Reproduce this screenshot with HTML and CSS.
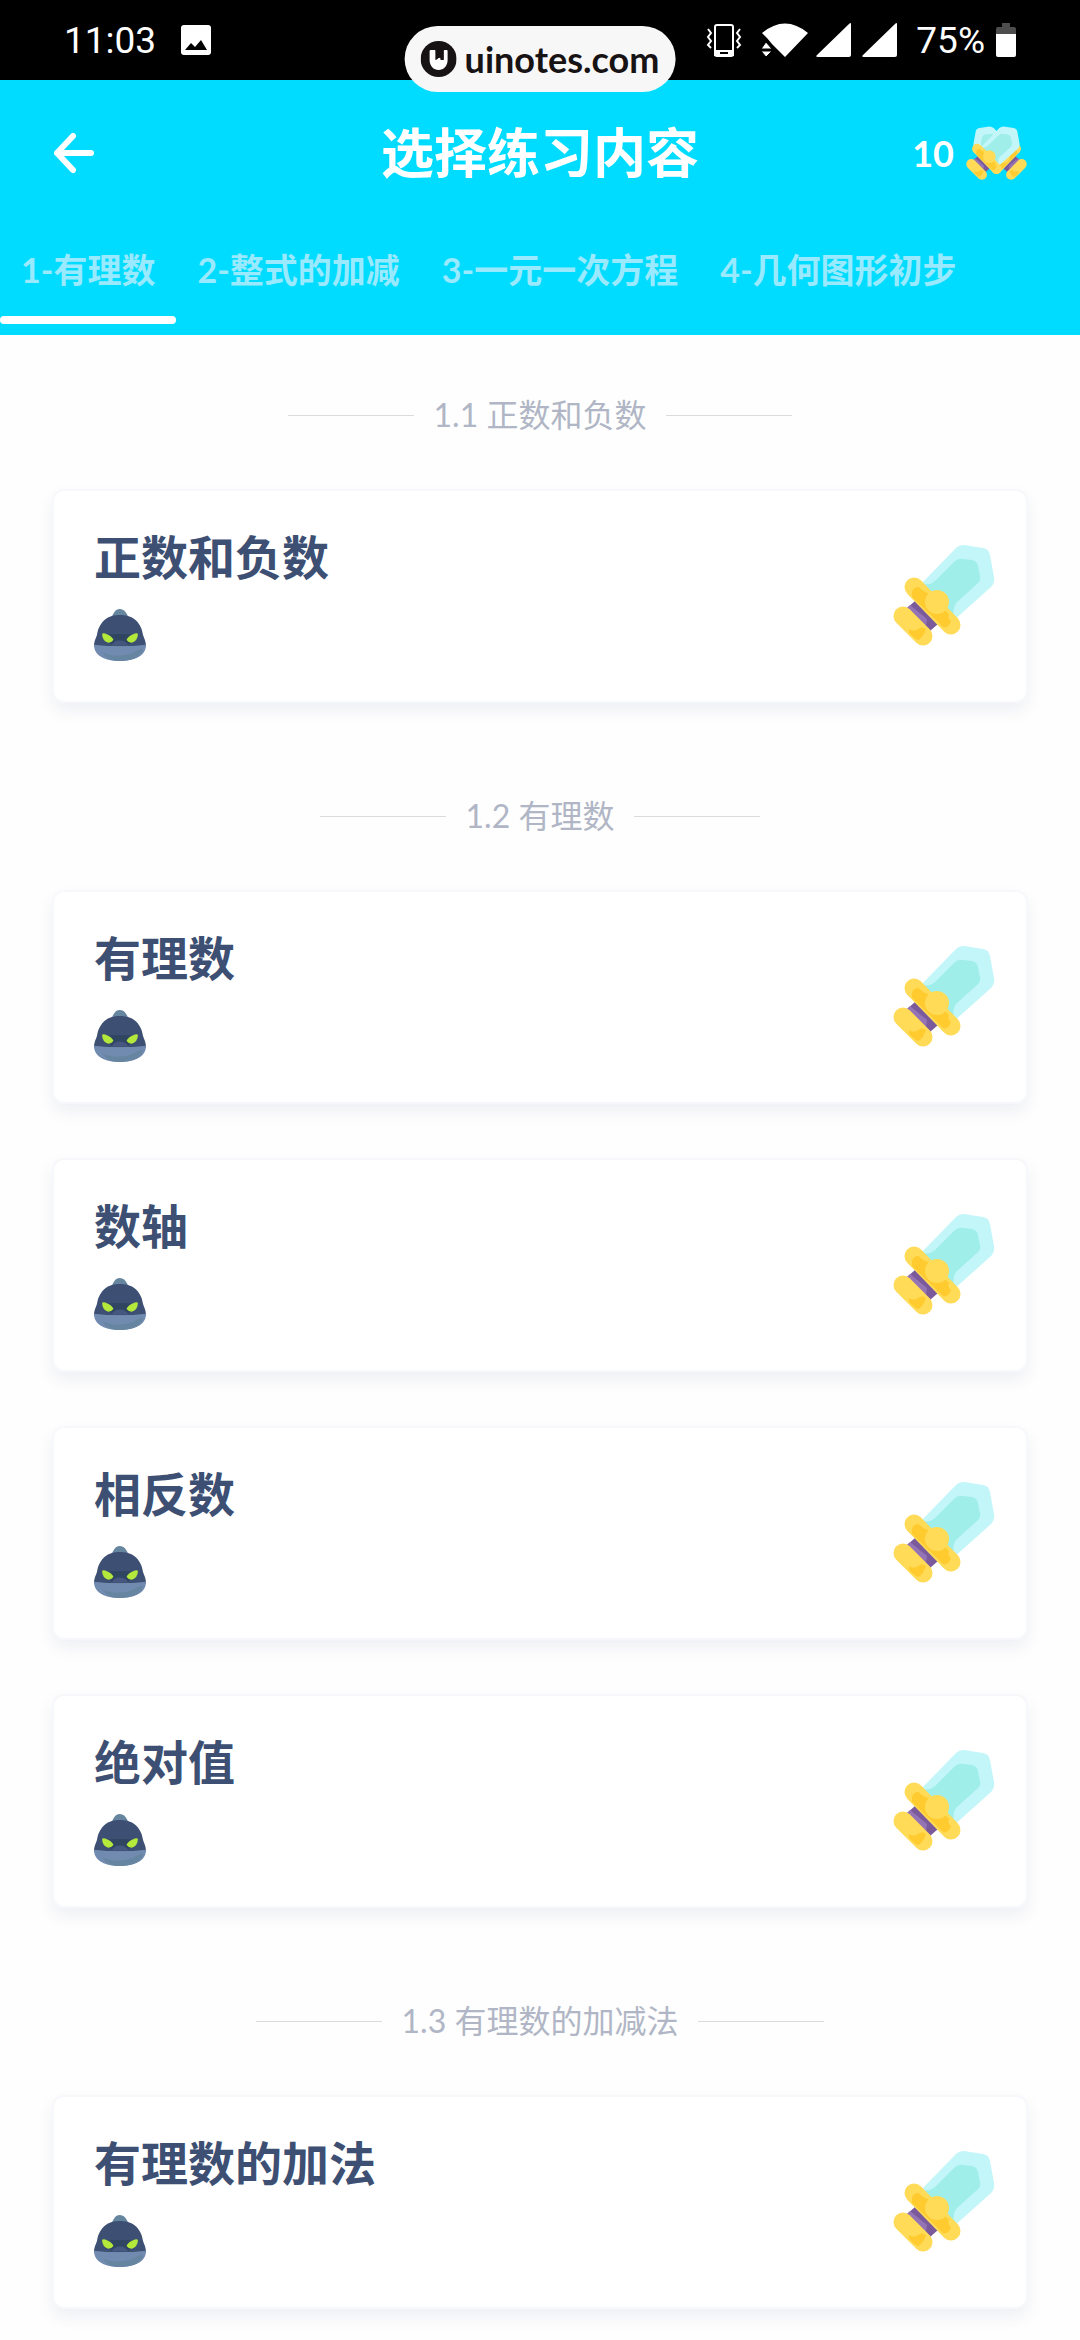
FILE: index.html
```html
<!DOCTYPE html>
<html lang="zh-CN">
<head>
    <meta charset="UTF-8">
    <meta name="viewport" content="width=device-width, initial-scale=1.0">
    <title>选择练习内容</title>
    <link rel="stylesheet" href="styles.css">
</head>
<body>
    <!-- Shared icons -->
    <svg class="sprite" aria-hidden="true">
        <symbol id="sword" viewBox="0 0 102 102">
            <path d="M29 39 L63 4 Q66 1 71 1 L90 4 Q96 5 97 11 L101 33 Q102 39 98 43 L60 77 Z" fill="#c3f6f9"/>
            <path d="M29 40 Q37 42 43 36 L61 18 Q65 14 70 15 L79 16 Q84 17 85 22 L87 32 Q88 37 84 40 L64 58 Q59 63 61 76 L44 64 Z" fill="#9feeea"/>
            <path d="M22 57 L45 80 L37 87 L14 64 Z" fill="#7b5a9c"/>
            <path d="M17 61 L34 75 L33 82 L14 64 Z" fill="#9474b5"/>
            <path d="M10 72 L30 92" stroke="#ffdb57" stroke-width="19" stroke-linecap="round"/>
            <path d="M16 85 Q21 88 25 85 Q29 82 33 85 Q30 94 25 96 Q22 95 16 89 Z" fill="#ffcb2f"/>
            <path d="M21 43 L58 81" stroke="#ffdb57" stroke-width="19" stroke-linecap="round"/>
            <path d="M19 48 Q20 43 26 43 Q29 47 35 49 L56 70 Q54 74 58 77 Q55 85 50 83 L19 53 Z" fill="#ffcb2f"/>
            <circle cx="44" cy="58" r="12" fill="#ffdb57"/>
        </symbol>
        <symbol id="monster" viewBox="0 0 51 51">
            <path d="M17 9 C19 4 21 0 25 0 C30 0 32 4 34 9 Z" fill="#66859f"/>
            <path d="M0 37 C0 31 2 29 3 25 C4 20 5 16 10 11 C15 7 20 6 25 6 C31 6 36 7 41 11 C46 16 47 20 48 25 C49 29 51 31 51 37 Z" fill="#3d5073"/>
            <path d="M11 25 Q25 24 40 25 L33 36 H18 Z" fill="#304562"/>
            <path d="M17 36 Q20 31 25 31 Q31 31 34 36 Z" fill="#45577e"/>
            <path d="M0 35 Q25 38 51 35 C51 46 40 51 25 51 C11 51 0 46 0 35 Z" fill="#718aaf"/>
            <path d="M9 43 C17 47 33 47 42 41 Q46 38 48 40 C45 48 36 51 25 51 C18 51 12 49 9 43 Z" fill="#6685a1"/>
            <path d="M8 25 Q8 23 11 24 Q17 26 19 30 Q18 33 14 33 Q8 31 8 25 Z" fill="#b4e93c"/>
            <path d="M43 25 Q43 23 40 24 Q34 26 32 30 Q33 33 37 33 Q43 31 43 25 Z" fill="#b4e93c"/>
        </symbol>
    </svg>

    <div class="status-bar">
        <div class="status-group">
            <span>11:03</span>
            <svg class="photo-icon" width="30" height="30" viewBox="0 0 30 30" aria-hidden="true">
                <rect width="30" height="30" rx="3" fill="#fff"/>
                <path d="M4 25 L10 18 L14 22 L20 15 L26 25 Z" fill="#000"/>
            </svg>
        </div>
        <div class="status-group">
            <svg width="36" height="34" viewBox="0 0 36 34" fill="none" stroke="#fff" stroke-width="2" aria-hidden="true">
                <rect x="9" y="2" width="18" height="31" rx="2"/>
                <path d="M9 28 H27 V32 H9 Z" fill="#fff"/>
                <path d="M14 30 H22" stroke="#000"/>
                <path d="M2 6 L5 10 L2 14 L5 18 L2 22 L5 25 M34 6 L31 10 L34 14 L31 18 L34 22 L31 25"/>
            </svg>
            <svg class="wifi-icon" width="48" height="34" viewBox="0 0 48 34" fill="#fff" aria-hidden="true">
                <path d="M1 10 Q24 -9 47 10 L24 34 L11 21 L6 15 Z"/>
                <path d="M5 19 L11 26 H0 Z M0 28 H11 L5 34 Z" stroke="#000" stroke-width="1"/>
            </svg>
            <svg width="35" height="34" viewBox="0 0 35 34" aria-hidden="true">
                <path d="M35 1 V32 Q35 34 33 34 H2 Q-1 34 1 32 L33 1 Q35 -1 35 1 Z" fill="#fff"/>
            </svg>
            <svg width="35" height="34" viewBox="0 0 35 34" aria-hidden="true">
                <path d="M35 1 V32 Q35 34 33 34 H2 Q-1 34 1 32 L33 1 Q35 -1 35 1 Z" fill="#fff"/>
            </svg>
            <span class="battery-level">75%</span>
            <svg width="20" height="34" viewBox="0 0 20 34" aria-hidden="true">
                <path d="M6 0 H14 V4 H18 Q20 4 20 6 V11 H0 V6 Q0 4 2 4 H6 Z" fill="#4d4d4d"/>
                <path d="M0 11 H20 V32 Q20 34 18 34 H2 Q0 34 0 32 Z" fill="#fff"/>
            </svg>
        </div>
        <div class="watermark">
            <svg width="36" height="36" viewBox="0 0 36 36" aria-hidden="true">
                <circle cx="18" cy="18" r="18" fill="#171213"/>
                <path d="M9 10 Q9 9 10 9 H14 Q15 9 15 10 V19 L18 17 Q20 16 20 19 L23 19 V10 Q23 9 24 9 H26 Q27 9 27 10 V19 C27 25 23 29 18 29 C13 29 9 25 9 19 Z" fill="#fff"/>
                <path d="M15 9 H23 V19 L19 16 L15 19 Z" fill="#171213"/>
            </svg>
            <span>uinotes.com</span>
        </div>
    </div>

    <header class="header">
        <div class="title-bar">
            <button type="button" class="back-btn" aria-label="返回">
                <svg width="42" height="42" viewBox="0 0 42 42" fill="none" stroke="#fff" stroke-width="6" stroke-linecap="round" stroke-linejoin="round" aria-hidden="true">
                    <path d="M20 4 L4 21 L20 38 M4 21 H38"/>
                </svg>
            </button>
            <h1>选择练习内容</h1>
            <div class="score">
                <span>10</span>
                <svg width="61" height="55" viewBox="0 0 61 55" aria-hidden="true">
                    <use href="#sword" width="54" height="54" transform="translate(61 0) scale(-1 1)"/>
                    <use href="#sword" width="54" height="54"/>
                </svg>
            </div>
        </div>
        <nav class="tabs">
            <a href="#" class="tab active">1-有理数</a>
            <a href="#" class="tab">2-整式的加减</a>
            <a href="#" class="tab">3-一元一次方程</a>
            <a href="#" class="tab">4-几何图形初步</a>
        </nav>
    </header>

    <main class="content">
        <section class="section">
            <h2 class="section-title">1.1 正数和负数</h2>
            <a href="#" class="card">
                <div class="card-info">
                    <h3>正数和负数</h3>
                    <svg class="monster" aria-hidden="true"><use href="#monster"/></svg>
                </div>
                <svg class="sword" aria-hidden="true"><use href="#sword"/></svg>
            </a>
        </section>

        <section class="section">
            <h2 class="section-title">1.2 有理数</h2>
            <a href="#" class="card">
                <div class="card-info">
                    <h3>有理数</h3>
                    <svg class="monster" aria-hidden="true"><use href="#monster"/></svg>
                </div>
                <svg class="sword" aria-hidden="true"><use href="#sword"/></svg>
            </a>
            <a href="#" class="card">
                <div class="card-info">
                    <h3>数轴</h3>
                    <svg class="monster" aria-hidden="true"><use href="#monster"/></svg>
                </div>
                <svg class="sword" aria-hidden="true"><use href="#sword"/></svg>
            </a>
            <a href="#" class="card">
                <div class="card-info">
                    <h3>相反数</h3>
                    <svg class="monster" aria-hidden="true"><use href="#monster"/></svg>
                </div>
                <svg class="sword" aria-hidden="true"><use href="#sword"/></svg>
            </a>
            <a href="#" class="card">
                <div class="card-info">
                    <h3>绝对值</h3>
                    <svg class="monster" aria-hidden="true"><use href="#monster"/></svg>
                </div>
                <svg class="sword" aria-hidden="true"><use href="#sword"/></svg>
            </a>
        </section>

        <section class="section">
            <h2 class="section-title">1.3 有理数的加减法</h2>
            <a href="#" class="card">
                <div class="card-info">
                    <h3>有理数的加法</h3>
                    <svg class="monster" aria-hidden="true"><use href="#monster"/></svg>
                </div>
                <svg class="sword" aria-hidden="true"><use href="#sword"/></svg>
            </a>
        </section>
    </main>
</body>
</html>
```

FILE: styles.css
```css
* {
    margin: 0;
    padding: 0;
    box-sizing: border-box;
}

body {
    font-family: Lato, "Noto Sans CJK SC", sans-serif;
    background: #fefefe;
    color: #3d5073;
}

a {
    color: inherit;
    text-decoration: none;
}

svg {
    display: block;
    flex-shrink: 0;
}

.sprite {
    position: absolute;
    width: 0;
    height: 0;
}

/* Status bar */
.status-bar {
    position: relative;
    display: flex;
    align-items: center;
    justify-content: space-between;
    height: 80px;
    padding: 0 64px;
    background: #000;
    color: #fff;
    font-family: Roboto, sans-serif;
    font-size: 37px;
}

.status-group {
    display: flex;
    align-items: center;
    gap: 11px;
}

.photo-icon {
    margin-left: 14px;
}

.wifi-icon {
    margin-left: 8px;
    margin-right: -4px;
}

.battery-level {
    margin-left: 8px;
}

.watermark {
    position: absolute;
    top: 26px;
    left: 50%;
    transform: translateX(-50%);
    display: flex;
    align-items: center;
    gap: 8px;
    height: 66px;
    padding: 0 16px;
    border-radius: 33px;
    background: #f7f7f7;
    color: #171213;
    font-family: Lato, sans-serif;
    font-size: 36px;
    font-weight: 700;
}

/* Header */
.header {
    background: #00dcff;
    color: #fff;
}

.title-bar {
    display: grid;
    grid-template-columns: 1fr auto 1fr;
    align-items: center;
    height: 146px;
    padding: 0 53px;
}

.title-bar h1 {
    font-size: 53px;
    font-weight: 700;
    line-height: 72px;
}

.back-btn {
    justify-self: start;
    border: none;
    background: none;
    cursor: pointer;
}

.score {
    justify-self: end;
    display: flex;
    align-items: center;
    gap: 12px;
    font-size: 36px;
    font-weight: 700;
}

.tabs {
    display: flex;
    padding-bottom: 11px;
    overflow: hidden;
}

.tab {
    flex-shrink: 0;
    padding: 22px 21px 0;
    color: #99e9ff;
    font-size: 34px;
    font-weight: 700;
    line-height: 44px;
}

.tab::after {
    content: "";
    display: block;
    height: 8px;
    margin: 24px -21px 0;
    border-radius: 4px;
}

.tab.active::after {
    background: #fff;
}

/* Content */
.content {
    padding: 60px 52px 24px;
}

.section + .section {
    margin-top: 93px;
}

.section-title {
    display: flex;
    align-items: center;
    justify-content: center;
    gap: 20px;
    color: #b0b6c5;
    font-size: 32px;
    font-weight: 400;
    line-height: 40px;
}

.section-title::before,
.section-title::after {
    content: "";
    width: 126px;
    height: 1px;
    background: #d9dbdf;
}

.card {
    display: flex;
    align-items: center;
    justify-content: space-between;
    margin-top: 54px;
    padding: 38px 31px 40px 40px;
    border: 2px solid #f7f8fb;
    border-radius: 12px;
    background: #fff;
    box-shadow: 0 8px 16px rgba(61, 80, 130, 0.08);
}

.card h3 {
    font-size: 47px;
    font-weight: 700;
    line-height: 56px;
}

.monster {
    width: 52px;
    height: 52px;
    margin-top: 24px;
}

.sword {
    width: 102px;
    height: 102px;
}
```
